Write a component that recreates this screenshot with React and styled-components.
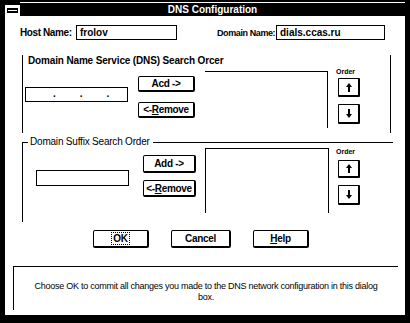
import React from 'react';
import styled, { createGlobalStyle } from 'styled-components';

const GlobalStyle = createGlobalStyle`
  html, body {
    margin: 0;
    padding: 0;
    background: #000;
  }
  body {
    font-family: 'Liberation Sans', Arial, sans-serif;
    color: #000;
  }
`;

const Window = styled.div`
  width: 410px;
  height: 323px;
  box-sizing: border-box;
  background: #000;
  padding: 0 5px 8px 5px;
  display: flex;
  flex-direction: column;
`;

const TitleBar = styled.div`
  height: 16px;
  flex-shrink: 0;
  display: flex;
`;

const SysMenu = styled.div`
  width: 15px;
  height: 11px;
  margin-top: 5px;
  background: #fff;
  display: flex;
  align-items: center;
  justify-content: center;
`;

const Caption = styled.div`
  flex: 1;
  background: linear-gradient(#000 0 2px, #fff 2px 3px, #000 3px);
  color: #fff;
  font-size: 10px;
  font-weight: bold;
  display: flex;
  align-items: center;
  justify-content: center;
  padding-top: 3px;
`;

const Client = styled.div`
  flex: 1;
  background: #fff;
  padding-top: 9px;
  display: flex;
  flex-direction: column;
`;

const HostRow = styled.div`
  display: flex;
  align-items: center;
  margin-left: 15px;
  height: 15px;
`;

const Label = styled.span`
  width: ${p => p.$w}px;
  font-size: ${p => p.$size || 10}px;
  font-weight: bold;
  letter-spacing: -0.4px;
  white-space: nowrap;
  flex-shrink: 0;
`;

const TextBox = styled.div`
  width: ${p => p.$w}px;
  height: ${p => p.$h || 15}px;
  margin-left: ${p => p.$ml || 0}px;
  margin-top: ${p => p.$mt || 0}px;
  box-sizing: border-box;
  border: 1px solid #000;
  padding-left: 3px;
  font-size: 10px;
  font-weight: bold;
  display: flex;
  align-items: center;
  flex-shrink: 0;
`;

const IpDots = styled.div`
  display: flex;
  gap: 24px;
  padding-left: 24px;
  font-size: 10px;
  font-weight: bold;
  line-height: 10px;
  margin-top: -2px;
`;

const Spacer = styled.div`
  width: ${p => p.$w}px;
  flex-shrink: 0;
`;

const DnsGroup = styled.div`
  margin-left: 17px;
  margin-top: 15px;
  width: 369px;
  height: 78px;
  box-sizing: border-box;
  border-left: 1px solid #000;
  border-right: 1px solid #000;
  display: flex;
  flex-direction: column;
`;

const GroupTitle = styled.div`
  height: 12px;
  line-height: 12px;
  padding-left: 5px;
  font-size: 10px;
  font-weight: bold;
  letter-spacing: -0.15px;
  white-space: nowrap;
`;

const GroupBody = styled.div`
  display: flex;
  align-items: flex-start;
  flex: 1;
  border-left: ${p => (p.$edge ? '1px solid #000' : 'none')};
`;

const ButtonStack = styled.div`
  display: flex;
  flex-direction: column;
  gap: ${p => p.$gap}px;
  margin-left: ${p => p.$ml}px;
  margin-top: ${p => p.$mt}px;
`;

const PushButton = styled.button`
  width: ${p => p.$w}px;
  height: ${p => p.$h || 17}px;
  box-sizing: border-box;
  background: #fff;
  color: #000;
  border: 1px solid #000;
  border-right-width: 2px;
  border-bottom-width: 2px;
  border-radius: 2px;
  padding: 0;
  font-family: 'Liberation Sans', Arial, sans-serif;
  font-size: 10px;
  font-weight: bold;
  letter-spacing: -0.3px;
  display: flex;
  align-items: center;
  justify-content: center;
  white-space: nowrap;
`;

const Focus = styled.span`
  border: 1px dotted #000;
  padding: 0 1px;
  line-height: 11px;
`;

const ListBox = styled.div`
  width: ${p => p.$w}px;
  height: ${p => p.$h}px;
  margin-left: ${p => p.$ml}px;
  margin-top: ${p => p.$mt}px;
  box-sizing: border-box;
  border-top: 1px solid #000;
  border-right: 1px solid #000;
  border-left: ${p => (p.$left ? '1px solid #000' : 'none')};
  flex-shrink: 0;
`;

const OrderColumn = styled.div`
  display: flex;
  flex-direction: column;
  align-items: flex-start;
  margin-left: ${p => p.$ml}px;
  margin-top: ${p => p.$mt || 0}px;
`;

const OrderLabel = styled.span`
  font-size: 7px;
  font-weight: bold;
  line-height: 9px;
  height: 9px;
  margin-left: -2px;
`;

const OrderButton = styled(PushButton)`
  width: 22px;
  height: ${p => p.$h || 19}px;
  margin-top: ${p => p.$mt}px;
  border-radius: 1px;
`;

const SuffixGroup = styled.div`
  margin-left: 17px;
  margin-top: 4px;
  width: 371px;
  display: flex;
  flex-direction: column;
`;

const GroupHeader = styled.div`
  height: 10px;
  display: flex;
`;

const Corner = styled.div`
  width: 6px;
  height: 5px;
  align-self: flex-end;
  box-sizing: border-box;
  border-top: 1px solid #000;
  border-left: 1px solid #000;
`;

const HeaderTitle = styled.span`
  font-size: 10px;
  line-height: 10px;
  padding: 0 3px 0 2px;
  white-space: nowrap;
  letter-spacing: -0.2px;
`;

const Rule = styled.div`
  flex: 1;
  margin-top: 5px;
  border-top: 1px solid #000;
`;

const SuffixBody = styled(GroupBody)`
  height: 75px;
  flex: none;
`;

const ButtonRow = styled.div`
  display: flex;
  gap: 22px;
  margin-top: 8px;
  margin-left: 88px;
`;

const StatusBox = styled.div`
  margin-top: 18px;
  margin-left: 8px;
  width: 385px;
  height: 44px;
  box-sizing: border-box;
  border-top: 1px solid #000;
  border-left: 1px solid #000;
  padding-top: 14px;
  display: flex;
  justify-content: center;
`;

const StatusText = styled.p`
  margin: 0;
  width: 360px;
  text-align: center;
  font-size: 9px;
  line-height: 11px;
  letter-spacing: -0.25px;
`;

const Arrow = ({ down }) => (
  <svg width="6" height="9" viewBox="0 0 6 9" style={down ? { transform: 'scaleY(-1)' } : undefined}>
    <path d="M3 0 L6 4 H4 V9 H2 V4 H0 Z" fill="#000" />
  </svg>
);

const SysGlyph = () => (
  <svg width="11" height="5" viewBox="0 0 11 5">
    <rect x="0" y="0" width="11" height="5" fill="#000" />
    <rect x="1" y="2" width="9" height="1" fill="#fff" />
  </svg>
);

export default function App() {
  return (
    <>
      <GlobalStyle />
      <Window>
        <TitleBar>
          <SysMenu><SysGlyph /></SysMenu>
          <Caption>DNS Configuration</Caption>
        </TitleBar>
        <Client>
          <HostRow>
            <Label $w={56}>Host Name:</Label>
            <TextBox $w={101}>frolov</TextBox>
            <Spacer $w={40} />
            <Label $w={59} $size={9}>Domain Name:</Label>
            <TextBox $w={109}>dials.ccas.ru</TextBox>
          </HostRow>

          <DnsGroup>
            <GroupTitle>Domain Name Service (DNS) Search Orcer</GroupTitle>
            <GroupBody>
              <TextBox $w={103} $ml={2} $mt={20}>
                <IpDots><span>.</span><span>.</span><span>.</span></IpDots>
              </TextBox>
              <ButtonStack $ml={10} $mt={9} $gap={10}>
                <PushButton $w={57} $h={16}>Acd -&gt;</PushButton>
                <PushButton $w={57} $h={16}>&lt;- <u>R</u>emove</PushButton>
              </ButtonStack>
              <ListBox $w={123} $h={57} $ml={10} $mt={4} />
              <OrderColumn $ml={10}>
                <OrderLabel>Order</OrderLabel>
                <OrderButton $mt={2}><Arrow /></OrderButton>
                <OrderButton $mt={7} $h={20}><Arrow down /></OrderButton>
              </OrderColumn>
            </GroupBody>
          </DnsGroup>

          <SuffixGroup>
            <GroupHeader>
              <Corner />
              <HeaderTitle>Domain Suffix Search Order</HeaderTitle>
              <Rule />
            </GroupHeader>
            <SuffixBody $edge>
              <TextBox $w={93} $h={16} $ml={13} $mt={23} />
              <ButtonStack $ml={14} $mt={8} $gap={7}>
                <PushButton $w={53} $h={18}>Add -&gt;</PushButton>
                <PushButton $w={53} $h={17}>&lt;- <u>R</u>emove</PushButton>
              </ButtonStack>
              <ListBox $w={124} $h={65} $ml={9} $mt={1} $left />
              <OrderColumn $ml={9}>
                <OrderLabel>Order</OrderLabel>
                <OrderButton $mt={4} $h={18}><Arrow /></OrderButton>
                <OrderButton $mt={7} $h={20}><Arrow down /></OrderButton>
              </OrderColumn>
            </SuffixBody>
          </SuffixGroup>

          <ButtonRow>
            <PushButton $w={56} $h={18}><Focus>OK</Focus></PushButton>
            <PushButton $w={60} $h={18}>Cancel</PushButton>
            <PushButton $w={56} $h={18}><u>H</u>elp</PushButton>
          </ButtonRow>

          <StatusBox>
            <StatusText>
              Choose OK to commit all changes you made to the DNS network configuration in this dialog box.
            </StatusText>
          </StatusBox>
        </Client>
      </Window>
    </>
  );
}
